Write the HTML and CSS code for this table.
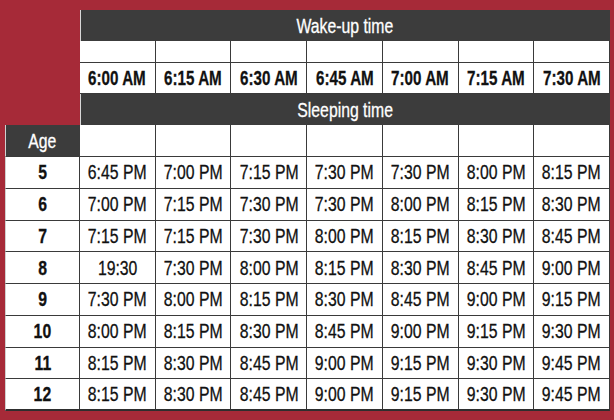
FILE: index.html
```html
<!DOCTYPE html>
<html>
<head>
<meta charset="utf-8">
<link rel="stylesheet" href="styles.css">
</head>
<body>
<div class="sheet">
  <div class="spacer"></div>
  <div class="band"><span class="t">Wake-up time</span></div>
  <div class="cell"></div><div class="cell"></div><div class="cell"></div><div class="cell"></div><div class="cell"></div><div class="cell"></div><div class="cell"></div>
  <div class="cell b"><span class="t">6:00 AM</span></div><div class="cell b"><span class="t">6:15 AM</span></div><div class="cell b"><span class="t">6:30 AM</span></div><div class="cell b"><span class="t">6:45 AM</span></div><div class="cell b"><span class="t">7:00 AM</span></div><div class="cell b"><span class="t">7:15 AM</span></div><div class="cell b"><span class="t">7:30 AM</span></div>
  <div class="band"><span class="t">Sleeping time</span></div>

  <div class="agehead"><span class="t">Age</span></div>
  <div class="cell"></div><div class="cell"></div><div class="cell"></div><div class="cell"></div><div class="cell"></div><div class="cell"></div><div class="cell"></div>

  <div class="age"><span class="t">5</span></div><div class="cell"><span class="t">6:45 PM</span></div><div class="cell"><span class="t">7:00 PM</span></div><div class="cell"><span class="t">7:15 PM</span></div><div class="cell"><span class="t">7:30 PM</span></div><div class="cell"><span class="t">7:30 PM</span></div><div class="cell"><span class="t">8:00 PM</span></div><div class="cell"><span class="t">8:15 PM</span></div>
  <div class="age"><span class="t">6</span></div><div class="cell"><span class="t">7:00 PM</span></div><div class="cell"><span class="t">7:15 PM</span></div><div class="cell"><span class="t">7:30 PM</span></div><div class="cell"><span class="t">7:30 PM</span></div><div class="cell"><span class="t">8:00 PM</span></div><div class="cell"><span class="t">8:15 PM</span></div><div class="cell"><span class="t">8:30 PM</span></div>
  <div class="age"><span class="t">7</span></div><div class="cell"><span class="t">7:15 PM</span></div><div class="cell"><span class="t">7:15 PM</span></div><div class="cell"><span class="t">7:30 PM</span></div><div class="cell"><span class="t">8:00 PM</span></div><div class="cell"><span class="t">8:15 PM</span></div><div class="cell"><span class="t">8:30 PM</span></div><div class="cell"><span class="t">8:45 PM</span></div>
  <div class="age"><span class="t">8</span></div><div class="cell"><span class="t">19:30</span></div><div class="cell"><span class="t">7:30 PM</span></div><div class="cell"><span class="t">8:00 PM</span></div><div class="cell"><span class="t">8:15 PM</span></div><div class="cell"><span class="t">8:30 PM</span></div><div class="cell"><span class="t">8:45 PM</span></div><div class="cell"><span class="t">9:00 PM</span></div>
  <div class="age"><span class="t">9</span></div><div class="cell"><span class="t">7:30 PM</span></div><div class="cell"><span class="t">8:00 PM</span></div><div class="cell"><span class="t">8:15 PM</span></div><div class="cell"><span class="t">8:30 PM</span></div><div class="cell"><span class="t">8:45 PM</span></div><div class="cell"><span class="t">9:00 PM</span></div><div class="cell"><span class="t">9:15 PM</span></div>
  <div class="age"><span class="t">10</span></div><div class="cell"><span class="t">8:00 PM</span></div><div class="cell"><span class="t">8:15 PM</span></div><div class="cell"><span class="t">8:30 PM</span></div><div class="cell"><span class="t">8:45 PM</span></div><div class="cell"><span class="t">9:00 PM</span></div><div class="cell"><span class="t">9:15 PM</span></div><div class="cell"><span class="t">9:30 PM</span></div>
  <div class="age"><span class="t">11</span></div><div class="cell"><span class="t">8:15 PM</span></div><div class="cell"><span class="t">8:30 PM</span></div><div class="cell"><span class="t">8:45 PM</span></div><div class="cell"><span class="t">9:00 PM</span></div><div class="cell"><span class="t">9:15 PM</span></div><div class="cell"><span class="t">9:30 PM</span></div><div class="cell"><span class="t">9:45 PM</span></div>
  <div class="age last"><span class="t">12</span></div><div class="cell last"><span class="t">8:15 PM</span></div><div class="cell last"><span class="t">8:30 PM</span></div><div class="cell last"><span class="t">8:45 PM</span></div><div class="cell last"><span class="t">9:00 PM</span></div><div class="cell last"><span class="t">9:15 PM</span></div><div class="cell last"><span class="t">9:30 PM</span></div><div class="cell last"><span class="t">9:45 PM</span></div>
</div>
</body>
</html>
```
FILE: styles.css
```css
html, body {
  margin: 0;
  padding: 0;
  background: #a62a38;
  width: 614px;
  height: 420px;
  overflow: hidden;
}
.sheet {
  margin: 10px 0 0 5px;
  width: 605px;
  display: grid;
  grid-template-columns: 75px repeat(7, minmax(0, 1fr));
  grid-template-rows: 31px 22px 31px 31px 32px repeat(8, 31.75px);
  font-family: "Liberation Sans", Arial, sans-serif;
  font-size: 20.5px;
  color: #111;
}
.t {
  display: inline-block;
  white-space: nowrap;
  transform: scaleX(0.77);
  -webkit-text-stroke: 0.3px currentColor;
}
.b .t {
  transform: scaleX(0.74);
}
.spacer {
  grid-column: 1;
  grid-row: 1 / 5;
}
.band {
  grid-column: 2 / 9;
  background: #3c3c3c;
  color: #fff;
  display: flex;
  align-items: center;
  justify-content: center;
  border-left: 1px solid #d8d8d8;
  border-right: 1px solid #3c3c3c;
  box-sizing: border-box;
  overflow: hidden;
}
.cell, .age, .agehead {
  display: flex;
  align-items: center;
  justify-content: center;
  background: #fff;
  border-right: 1px solid #3a3a3a;
  border-bottom: 1px solid #3a3a3a;
  box-sizing: border-box;
  min-width: 0;
  overflow: hidden;
}
.cell.b {
  font-weight: bold;
}
.agehead {
  background: #3c3c3c;
  color: #fff;
  border-left: 1px solid #d0d0d0;
  border-right: 1px solid #3c3c3c;
}
.age {
  font-weight: bold;
  border-left: 1px solid #d0d0d0;
}
.last {
  border-bottom: 2px solid #2e2e2e;
}
```
